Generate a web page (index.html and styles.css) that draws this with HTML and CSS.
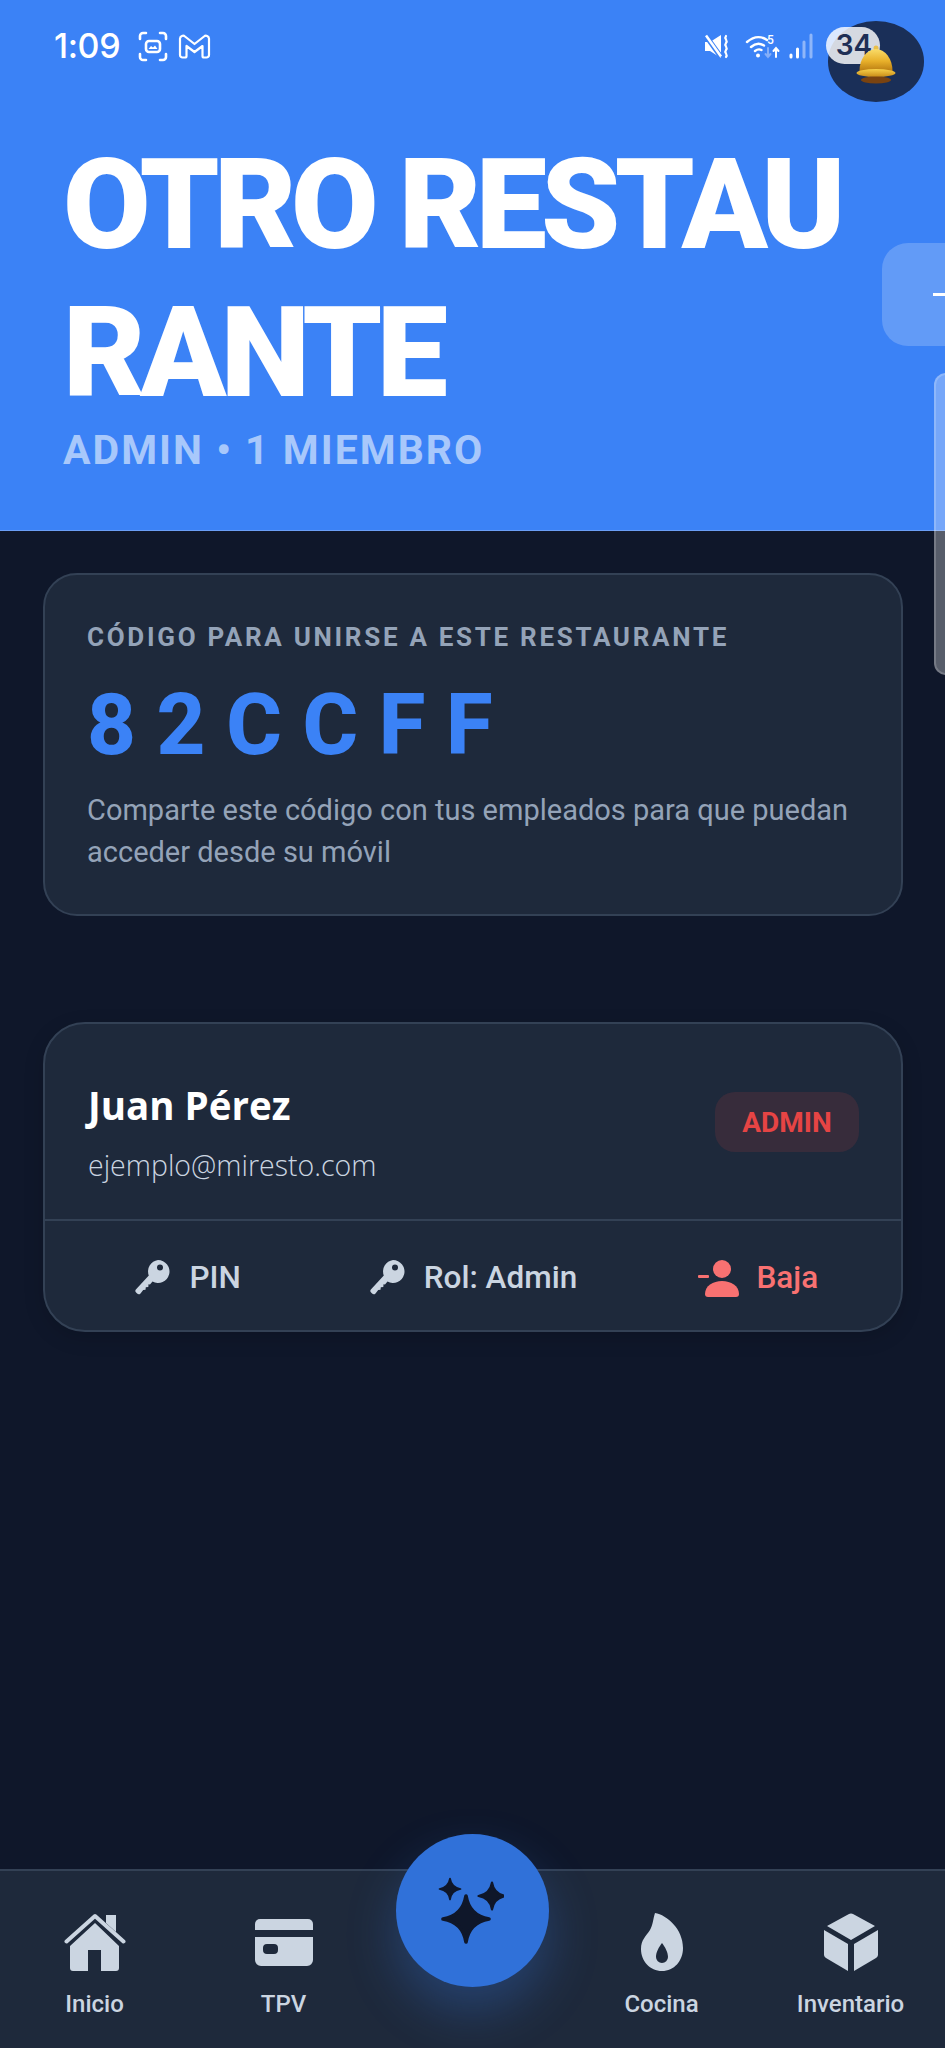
FILE: index.html
```html
<!DOCTYPE html>
<html lang="es">
<head>
<meta charset="utf-8">
<title>Otro Restaurante</title>
<link rel="stylesheet" href="styles.css">
</head>
<body>
<div class="app">
  <header class="hero">
    <div class="status">
      <span class="time">1:09</span>
      <svg class="st-shot" viewBox="0 0 30 31" fill="none" stroke="#fff" stroke-width="2.6" stroke-linecap="round"><path d="M2 8V5a3 3 0 0 1 3-3h3M22 2h3a3 3 0 0 1 3 3v3M28 23v3a3 3 0 0 1-3 3h-3M8 29H5a3 3 0 0 1-3-3v-3"/><rect x="8" y="10" width="14" height="11" rx="3"/><path d="M10.500 18l2.500-3 2 1.500 2-2 2.500 3.500z" fill="#fff" stroke="none"/></svg>
      <svg class="st-m" viewBox="0 0 33 25" fill="none" stroke="#fff" stroke-width="2.200" stroke-linejoin="round"><path d="M2 4.500a3 3 0 0 1 5-2L16.500 10 26 2.500a3 3 0 0 1 5 2V21a2.500 2.500 0 0 1-2.500 2.500H26a1.500 1.500 0 0 1-1.500-1.500V12l-8 6-8-6v10A1.500 1.500 0 0 1 7 23.500H4.500A2.500 2.500 0 0 1 2 21z"/></svg>
      <span class="st-gap"></span>
      <svg class="st-mute" viewBox="0 0 25 25"><path d="M0 8h5l11-7v23L5 17H0z" fill="#fff"/><path d="M1 2l15 21" stroke="#3b82f6" stroke-width="5"/><path d="M1 1.500l15 21" stroke="#fff" stroke-width="2.600"/><path d="M21 2c-2.500 3 2.500 4 0 7s2.500 4 0 7 2.500 4 0 7" fill="none" stroke="#fff" stroke-width="2.200" stroke-linecap="round"/></svg>
      <svg class="st-wifi" viewBox="0 0 35 25" fill="none" stroke-linecap="round"><g stroke="#fff" stroke-width="2.400"><path d="M2 8c7-6 14-6 20-2M6 13c4.500-4 9-4 13-1.500M10 17c2.500-2 4.500-2 6.500-1"/></g><circle cx="13" cy="21.500" r="2" fill="#fff"/><text class="st-five" x="22" y="10">5</text><path d="M23 14v9M20.500 20l2.500 3 2.500-3" stroke="#84aef8" stroke-width="2"/><path d="M31 23v-9M28.500 17l2.500-3 2.500 3" stroke="#fff" stroke-width="2"/></svg>
      <svg class="st-signal" viewBox="0 0 24 26" stroke-linecap="round" stroke-width="3"><path d="M2 24v-2" stroke="#fff"/><path d="M8.500 24v-8" stroke="#fff"/><path d="M15 24V9" stroke="#8fb6f9"/><path d="M22 24V2" stroke="#8fb6f9"/></svg>
      <span class="st-end"></span>
    </div>
    <h1 class="title">OTRO RESTAU<br>RANTE</h1>
    <p class="subtitle">ADMIN • 1 MIEMBRO</p>
  </header>

  <main class="content">
    <section class="card code-card">
      <p class="code-label">CÓDIGO PARA UNIRSE A ESTE RESTAURANTE</p>
      <p class="code-value">82CCFF</p>
      <p class="code-help">Comparte este código con tus empleados para que puedan acceder desde su móvil</p>
    </section>

    <section class="card member-card">
      <div class="member-top">
        <div class="member-info">
          <p class="member-name">Juan Pérez</p>
          <p class="member-mail">ejemplo@miresto.com</p>
        </div>
        <span class="badge">ADMIN</span>
      </div>
      <div class="member-actions">
        <button class="action">
          <svg class="key" viewBox="0 0 36 36" fill="#cbd5e1"><path fill-rule="evenodd" d="M24 0a11.500 11.500 0 1 1-5.500 21.600L16 24.500l-1.500-.2-.2 2.700-2.500.2-.3 2.600-2.300.2L6.500 33.500a2.500 2.500 0 0 1-3.400.1l-1-1a2.500 2.500 0 0 1 0-3.400L14.800 15.500A11.500 11.500 0 0 1 24 0zm2 4.500a3 3 0 1 0 0 6 3 3 0 0 0 0-6z"/></svg>
          <span>PIN</span>
        </button>
        <button class="action">
          <svg class="key" viewBox="0 0 36 36" fill="#cbd5e1"><path fill-rule="evenodd" d="M24 0a11.500 11.500 0 1 1-5.500 21.600L16 24.500l-1.500-.2-.2 2.700-2.500.2-.3 2.600-2.300.2L6.500 33.500a2.500 2.500 0 0 1-3.400.1l-1-1a2.500 2.500 0 0 1 0-3.400L14.800 15.500A11.500 11.500 0 0 1 24 0zm2 4.500a3 3 0 1 0 0 6 3 3 0 0 0 0-6z"/></svg>
          <span>Rol: Admin</span>
        </button>
        <button class="action danger">
          <svg class="person" viewBox="0 0 42 38" fill="#f87171"><circle cx="24" cy="10" r="9"/><path d="M7 35c0-8 8-13 17-13s17 5 17 13a3 3 0 0 1-3 3H10a3 3 0 0 1-3-3z"/><rect x="0" y="16" width="11" height="3" rx="1"/></svg>
          <span>Baja</span>
        </button>
      </div>
    </section>
  </main>

  <nav class="nav">
    <a class="nav-item">
      <svg class="nav-ico" viewBox="0 0 62 58" fill="#cbd5e1"><path d="M31 10L6 33v22a3 3 0 0 0 3 3h15V37h13v21h15a3 3 0 0 0 3-3V33z"/><path d="M42 2h10v17L42 10z"/><path d="M2.500 28.500L31 3l28.500 25.500" fill="none" stroke="#cbd5e1" stroke-width="4" stroke-linecap="round" stroke-linejoin="round"/></svg>
      <span>Inicio</span>
    </a>
    <a class="nav-item">
      <svg class="nav-ico" viewBox="0 0 58 58" fill="#cbd5e1"><path d="M0 17v-6a5 5 0 0 1 5-5h48a5 5 0 0 1 5 5v6z"/><path fill-rule="evenodd" d="M0 24h58v23a6 6 0 0 1-6 6H6a6 6 0 0 1-6-6zm12 7a4 4 0 0 0-4 4v2a4 4 0 0 0 4 4h7a4 4 0 0 0 4-4v-2a4 4 0 0 0-4-4z"/></svg>
      <span>TPV</span>
    </a>
    <div class="nav-fab-cell">
      <button class="fab">
        <svg class="fab-ico" viewBox="0 0 80 72" fill="#0f172a" stroke="#0f172a" stroke-linejoin="round" stroke-width="16"><path d="M0-100Q14-14 100 0Q14 14 0 100Q-14 14-100 0Q-14-14 0-100z" transform="translate(42 44) scale(.23)"/><path d="M0-100Q14-14 100 0Q14 14 0 100Q-14 14-100 0Q-14-14 0-100z" transform="translate(26 14) scale(.105)"/><path d="M0-100Q14-14 100 0Q14 14 0 100Q-14 14-100 0Q-14-14 0-100z" transform="translate(68 21) scale(.135)"/></svg>
      </button>
    </div>
    <a class="nav-item">
      <svg class="nav-ico" viewBox="0 0 42 58" fill="#cbd5e1"><path fill-rule="evenodd" d="M14 0c12 2 28 16 28 35 0 13-9 23-21 23S0 48 0 36c0-9 5-13 9-19 3-5 3-11 5-17zm7 30c-3 4-6 9-6 14a6 6 0 0 0 12 0c0-5-3-10-6-14z"/></svg>
      <span>Cocina</span>
    </a>
    <a class="nav-item">
      <svg class="nav-ico" viewBox="0 0 54 58" fill="#cbd5e1"><path d="M24.500 1.200c1.600-.9 3.400-.9 5 0L51 13 27 27 3 13z"/><path d="M0 17l24 14v27L2 45c-1.300-.8-2-2-2-3.500z"/><path d="M54 17L30 31v27l22-13c1.300-.8 2-2 2-3.500z"/></svg>
      <span>Inventario</span>
    </a>
  </nav>

  <div class="bubble"></div>
  <span class="pill"><span class="pill-num">34</span></span>
  <svg class="bell" viewBox="0 0 40 40">
    <defs>
      <linearGradient id="dome" x1="0" y1="0" x2="0" y2="1"><stop offset="0" stop-color="#f9dc6a"/><stop offset=".55" stop-color="#e8b02a"/><stop offset="1" stop-color="#b97c12"/></linearGradient>
      <linearGradient id="rim" x1="0" y1="0" x2="0" y2="1"><stop offset="0" stop-color="#f7d04a"/><stop offset="1" stop-color="#c88a16"/></linearGradient>
    </defs>
    <circle cx="20" cy="3" r="2.500" fill="#e9bf4a"/>
    <path d="M3.500 26a16.500 22 0 0 1 33 0z" fill="url(#dome)"/>
    <ellipse cx="20" cy="28" rx="19.500" ry="4" fill="url(#rim)"/>
    <ellipse cx="20" cy="35" rx="15" ry="3.500" fill="#7a4310"/>
  </svg>
  <div class="side-btn"><span class="side-dash"></span></div>
  <div class="side-panel"></div>
</div>
</body>
</html>
```
FILE: styles.css
```css
* { box-sizing: border-box; }
html, body { margin: 0; padding: 0; }
body { background: #0f172a; font-family: Roboto, "Noto Sans", sans-serif; }
p, h1 { margin: 0; }

.app {
  position: relative;
  width: 945px;
  height: 2048px;
  overflow: hidden;
  display: flex;
  flex-direction: column;
  background: #0f172a;
}

/* Header */
.hero {
  height: 531px;
  flex: none;
  background: #3b82f6;
  border-bottom: 1px solid #6b9ef5;
  padding: 26px 0 0 0;
}
.status {
  display: flex;
  align-items: center;
  height: 40px;
  padding-left: 54px;
  color: #fff;
}
.time { font: 500 34px/40px Inter, Roboto, sans-serif; letter-spacing: -.4px; width: 84px; }
.st-shot { width: 30px; height: 31px; margin-right: 10px; }
.st-m { width: 33px; height: 25px; }
.st-gap { flex: 1; }
.st-mute { width: 25px; height: 25px; margin-right: 15px; }
.st-wifi { width: 35px; height: 25px; margin-right: 9px; }
.st-five { font: 500 12px Roboto, sans-serif; fill: #fff; }
.st-signal { width: 24px; height: 26px; }
.st-end { width: 132px; }

.title {
  margin: 65px 0 0 63px;
  color: #fff;
  font: 900 127px/148px Roboto, sans-serif;
  letter-spacing: -5.8px;
}
.subtitle {
  margin: -1px 0 0 63px;
  color: #a8c8fb;
  font: 700 41px/48px Roboto, sans-serif;
  letter-spacing: 2px;
}

/* Content */
.content {
  flex: 1;
  padding: 42px 42px 0 43px;
  display: flex;
  flex-direction: column;
  gap: 106px;
}
.card {
  background: #1e293b;
  border: 2px solid #334155;
}
.code-card {
  height: 343px;
  border-radius: 34px;
  padding: 46px 42px 0;
}
.code-label {
  color: #94a3b8;
  font: 700 26px/32px Roboto, sans-serif;
  letter-spacing: 2.7px;
}
.code-value {
  margin-top: 22px;
  color: #3b82f6;
  font: 800 85px/100px Roboto, sans-serif;
  letter-spacing: 20.6px;
}
.code-help {
  margin-top: 14px;
  color: #94a3b8;
  font: 400 29px/42px Roboto, sans-serif;
}

.member-card {
  height: 310px;
  border-radius: 42px;
  box-shadow: 0 6px 20px rgba(0, 0, 0, .15);
  display: flex;
  flex-direction: column;
}
.member-top {
  height: 197px;
  flex: none;
  display: flex;
  justify-content: space-between;
  align-items: flex-start;
  padding: 57px 42px 0 43px;
  border-bottom: 2px solid #334155;
}
.member-name {
  color: #fff;
  font: 700 38.5px/48px "Open Sans", sans-serif;
}
.member-mail {
  margin-top: 18px;
  color: #cbd5e1;
  font: 300 28.5px/36px "Open Sans", sans-serif;
}
.badge {
  margin-top: 11px;
  width: 144px;
  height: 60px;
  border-radius: 20px;
  background: rgba(239, 68, 68, .12);
  color: #e64444;
  font: 700 28px/62px Roboto, sans-serif;
  text-align: center;
}
.member-actions {
  flex: 1;
  display: flex;
}
.action {
  flex: 1;
  display: flex;
  align-items: center;
  justify-content: center;
  gap: 19px;
  background: none;
  border: 0;
  padding: 4px 0 0;
  color: #cbd5e1;
  font: 500 31.5px/36px Roboto, sans-serif;
}
.action.danger { color: #f87171; gap: 16px; }
.key { width: 36px; height: 36px; }
.person { width: 42px; height: 38px; }

/* Nav */
.nav {
  height: 179px;
  flex: none;
  background: #1e293b;
  border-top: 2px solid #334155;
  display: grid;
  grid-template-columns: repeat(5, 1fr);
}
.nav-item {
  display: flex;
  flex-direction: column;
  align-items: center;
  padding-top: 42px;
  color: #cbd5e1;
  font: 500 24px/28px Roboto, sans-serif;
}
.nav-ico { height: 58px; width: 62px; margin-bottom: 19px; }
.nav-fab-cell { display: flex; justify-content: center; }
.fab {
  width: 153px;
  height: 153px;
  margin-top: -37px;
  border: 0;
  padding: 0;
  border-radius: 50%;
  background: #3071d9;
  box-shadow: 0 24px 50px rgba(59, 130, 246, .28);
  display: flex;
  align-items: center;
  justify-content: center;
}
.fab-ico { width: 80px; height: 72px; margin: 0 0 0 -17px; }

/* Floating overlays */
.bubble {
  position: absolute;
  left: 828px;
  top: 21px;
  width: 96px;
  height: 81px;
  border-radius: 48px / 40px;
  background: #1a2f58;
}
.bell {
  position: absolute;
  left: 856px;
  top: 45px;
  width: 40px;
  height: 40px;
}
.pill {
  position: absolute;
  left: 826px;
  top: 27px;
  width: 54px;
  height: 37px;
  border-radius: 19px;
  background: rgba(255, 255, 255, .82);
  color: #1e2e55;
  font: 600 28px/37px Inter, Roboto, sans-serif;
  text-align: center;
}
.pill-num { position: relative; left: 1px; }
.side-btn {
  position: absolute;
  left: 882px;
  top: 243px;
  width: 90px;
  height: 103px;
  border-radius: 26px;
  background: rgba(255, 255, 255, .2);
}
.side-dash {
  position: absolute;
  left: 51px;
  top: 50px;
  width: 24px;
  height: 3px;
  background: #fff;
}
.side-panel {
  position: absolute;
  left: 934px;
  top: 373px;
  width: 30px;
  height: 302px;
  border-radius: 12px;
  background: rgba(255, 255, 255, .3);
  border: 2px solid rgba(255, 255, 255, .18);
}
```
